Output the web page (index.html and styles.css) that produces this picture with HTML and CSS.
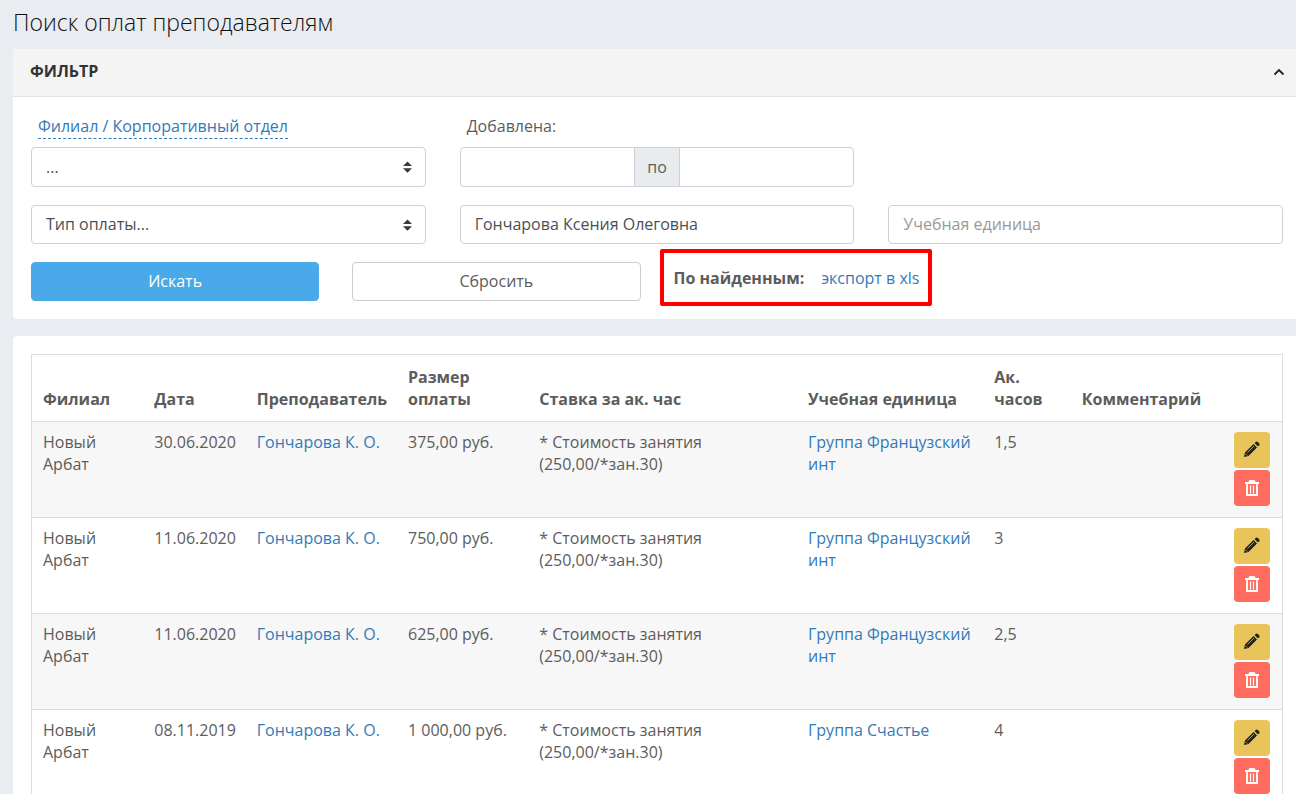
FILE: index.html
```html
<!DOCTYPE html>
<html lang="ru">
<head>
  <meta charset="UTF-8" />
  <title>Поиск оплат преподавателям</title>
  <link rel="stylesheet" href="styles.css">
</head>
<body>
  <!-- icons used in the table rows -->
  <svg class="sprite" aria-hidden="true">
    <symbol id="pencil" viewBox="0 0 18 18">
      <path fill="#222" d="M1 16l1-4.500 8.500-8.500 3.500 3.500L5.500 15zM11.500 2L13 .7q1-.6 1.800.2l1.400 1.400q.8.900.2 1.800L15 5.500z"/>
      <path fill="none" stroke="#e9c45b" stroke-width=".8" d="M4.500 11.500L11 5M2.500 12.800l1.800 1.800"/>
    </symbol>
    <symbol id="trash" viewBox="0 0 16 18">
      <path fill="none" stroke="#fff" stroke-width="2" stroke-linejoin="round" d="M1 4h14M5.200 3.500L6 2h4l.8 1.500"/>
      <path fill="none" stroke="#fff" stroke-width="1.800" d="M3 4v12h10V4"/>
      <path fill="none" stroke="#fff" stroke-width="1.200" d="M6.500 6.500v8M9.500 6.500v8"/>
    </symbol>
  </svg>

  <h1>Поиск оплат преподавателям</h1>

  <section class="panel">
    <div class="panel-header">
      <h2>ФИЛЬТР</h2>
      <button type="button" class="toggle" aria-label="Свернуть">
        <svg width="12" height="8" viewBox="0 0 12 8"><path d="M1.500 6.500L6 2l4.500 4.500" fill="none" stroke="#222" stroke-width="1.800"/></svg>
      </button>
    </div>
    <form class="panel-body" id="formFilter">
      <div class="fields">
        <div class="field">
          <label for="filial"><a href="#">Филиал / Корпоративный отдел</a></label>
          <select id="filial" class="control">
            <option>...</option>
          </select>
        </div>
        <div class="field">
          <label for="dateFrom">Добавлена:</label>
          <div class="range">
            <input type="text" id="dateFrom" class="control" />
            <span class="addon">по</span>
            <input type="text" id="dateTo" class="control" aria-label="Добавлена по" />
          </div>
        </div>
      </div>
      <div class="fields">
        <select class="control" aria-label="Тип оплаты">
          <option>Тип оплаты...</option>
        </select>
        <input type="text" class="control" value="Гончарова Ксения Олеговна" aria-label="Преподаватель" />
        <input type="text" class="control" placeholder="Учебная единица" aria-label="Учебная единица" />
      </div>
      <div class="actions">
        <button type="submit" class="btn btn-primary">Искать</button>
        <button type="reset" class="btn">Сбросить</button>
        <div class="found-cell">
          <div class="found"><b>По найденным:</b><a href="#">экспорт в xls</a></div>
        </div>
      </div>
    </form>
  </section>

  <section class="panel results">
    <table>
      <colgroup>
        <col class="c-filial"><col class="c-date"><col class="c-teacher"><col class="c-sum"><col class="c-rate"><col class="c-unit"><col class="c-hours"><col class="c-comment"><col>
      </colgroup>
      <thead>
        <tr>
          <th>Филиал</th>
          <th>Дата</th>
          <th>Преподаватель</th>
          <th>Размер оплаты</th>
          <th>Ставка за ак. час</th>
          <th>Учебная единица</th>
          <th>Ак. часов</th>
          <th>Комментарий</th>
          <th></th>
        </tr>
      </thead>
      <tbody>
        <tr>
          <td>Новый Арбат</td>
          <td>30.06.2020</td>
          <td><a href="#">Гончарова К. О.</a></td>
          <td>375,00 руб.</td>
          <td>* Стоимость занятия<br>(250,00/*зан.30)</td>
          <td><a href="#">Группа Французский инт</a></td>
          <td>1,5</td>
          <td></td>
          <td class="tools">
            <button type="button" class="icon edit" aria-label="Изменить"><svg width="18" height="18"><use href="#pencil"/></svg></button>
            <button type="button" class="icon delete" aria-label="Удалить"><svg width="16" height="18"><use href="#trash"/></svg></button>
          </td>
        </tr>
        <tr>
          <td>Новый Арбат</td>
          <td>11.06.2020</td>
          <td><a href="#">Гончарова К. О.</a></td>
          <td>750,00 руб.</td>
          <td>* Стоимость занятия<br>(250,00/*зан.30)</td>
          <td><a href="#">Группа Французский инт</a></td>
          <td>3</td>
          <td></td>
          <td class="tools">
            <button type="button" class="icon edit" aria-label="Изменить"><svg width="18" height="18"><use href="#pencil"/></svg></button>
            <button type="button" class="icon delete" aria-label="Удалить"><svg width="16" height="18"><use href="#trash"/></svg></button>
          </td>
        </tr>
        <tr>
          <td>Новый Арбат</td>
          <td>11.06.2020</td>
          <td><a href="#">Гончарова К. О.</a></td>
          <td>625,00 руб.</td>
          <td>* Стоимость занятия<br>(250,00/*зан.30)</td>
          <td><a href="#">Группа Французский инт</a></td>
          <td>2,5</td>
          <td></td>
          <td class="tools">
            <button type="button" class="icon edit" aria-label="Изменить"><svg width="18" height="18"><use href="#pencil"/></svg></button>
            <button type="button" class="icon delete" aria-label="Удалить"><svg width="16" height="18"><use href="#trash"/></svg></button>
          </td>
        </tr>
        <tr>
          <td>Новый Арбат</td>
          <td>08.11.2019</td>
          <td><a href="#">Гончарова К. О.</a></td>
          <td>1 000,00 руб.</td>
          <td>* Стоимость занятия<br>(250,00/*зан.30)</td>
          <td><a href="#">Группа Счастье</a></td>
          <td>4</td>
          <td></td>
          <td class="tools">
            <button type="button" class="icon edit" aria-label="Изменить"><svg width="18" height="18"><use href="#pencil"/></svg></button>
            <button type="button" class="icon delete" aria-label="Удалить"><svg width="16" height="18"><use href="#trash"/></svg></button>
          </td>
        </tr>
      </tbody>
    </table>
  </section>
</body>
</html>
```
FILE: styles.css
```css
* {
  box-sizing: border-box;
}

body {
  margin: 0;
  padding-left: 13px;
  font-family: "Open Sans", sans-serif;
  font-size: 16px;
  line-height: 22px;
  color: #5c5c5c;
  background-color: #e9ecf1;
}

a {
  color: #337ab7;
  text-decoration: none;
}

.sprite {
  display: none;
}

h1 {
  margin: 0;
  padding: 6px 0 11px;
  font-size: 23px;
  line-height: 32px;
  font-weight: 300;
  color: #111;
}

.panel {
  margin-bottom: 17px;
  background-color: white;
  border-radius: 4px 0 0 4px;
}

.panel-header {
  display: flex;
  justify-content: space-between;
  align-items: center;
  height: 48px;
  padding: 0 11px 3px 17px;
  background-color: #f4f4f4;
  border-bottom: 1px solid #e1e1e1;
}

h2 {
  margin: 0;
  font-size: 16px;
  font-weight: 700;
  color: #333;
}

.toggle {
  display: flex;
  padding: 2px 0 0;
  border: none;
  background: none;
  cursor: pointer;
}

.panel-body {
  display: grid;
  gap: 18px;
  padding: 18px 13px 18px 18px;
}

.fields {
  display: grid;
  grid-template-columns: repeat(3, 1fr);
  gap: 34px;
}

.field label {
  display: block;
  height: 22px;
  margin: 0 7px 10px;
}

.field label a {
  display: inline-block;
  height: 24px;
  border-bottom: 1px dashed #337ab7;
}

.control {
  display: block;
  width: 100%;
  min-width: 0;
  height: 39px;
  padding: 0 14px 2px;
  font: inherit;
  color: #495057;
  background-color: white;
  border: 1px solid #ced0da;
  border-radius: 4px;
}

.field .control {
  height: 40px;
  padding-bottom: 0;
}

.control::placeholder {
  color: #999;
  opacity: 1;
}

select.control {
  appearance: none;
  background: white url("data:image/svg+xml,%3Csvg xmlns='http://www.w3.org/2000/svg' viewBox='0 0 4 5'%3E%3Cpath fill='%23343a40' d='M2 0L0 2h4zm0 5L0 3h4z'/%3E%3C/svg%3E") no-repeat right 13px center;
  background-size: 9px 12px;
}

.range {
  display: flex;
}

.range .control:first-child {
  border-radius: 4px 0 0 4px;
}

.range .control:last-child {
  border-radius: 0 4px 4px 0;
}

.addon {
  padding: 8px 12px 0;
  background-color: #e9ecef;
  border: 1px solid #ced0da;
  border-width: 1px 0;
}

.actions {
  display: grid;
  grid-template-columns: repeat(4, 1fr);
  gap: 33px;
}

.btn {
  height: 39px;
  padding: 0 0 2px;
  font: inherit;
  color: #5c5c5c;
  background-color: white;
  border: 1px solid #ccc;
  border-radius: 4px;
  cursor: pointer;
}

.btn-primary {
  color: white;
  background-color: #4aa9e9;
  border-color: #4aa9e9;
}

.found-cell {
  padding-top: 5px;
}

.found {
  display: inline-flex;
  gap: 17px;
  position: relative;
  white-space: nowrap;
}

/* highlight frame around the export link */
.found::after {
  content: "";
  position: absolute;
  inset: -18px -13px -17px -14px;
  border: 4px solid #f00;
  border-radius: 2px;
  pointer-events: none;
}

.results {
  margin-bottom: 0;
  padding: 18px 13px 18px 18px;
}

table {
  width: 100%;
  table-layout: fixed;
  border-collapse: separate;
  border-spacing: 0;
  border: 1px solid #ddd;
  border-top: none;
}

th, td {
  padding: 9px 11px;
  border-top: 1px solid #ddd;
  text-align: left;
  vertical-align: top;
}

th {
  padding: 11px;
  vertical-align: bottom;
}

tbody tr:nth-child(odd) {
  background-color: #f7f7f7;
}

.c-filial { width: 8.9%; }
.c-date { width: 8.2%; }
.c-teacher { width: 12.1%; }
.c-sum { width: 10.5%; }
.c-rate { width: 21.5%; }
.c-unit { width: 14.9%; }
.c-hours { width: 7%; }
.c-comment { width: 12.1%; }

td.tools {
  padding: 10px 12px 11px;
}

.icon {
  display: flex;
  justify-content: center;
  align-items: center;
  width: 36px;
  height: 36px;
  padding: 0;
  border: none;
  border-radius: 4px;
  cursor: pointer;
}

.edit {
  margin-bottom: 2px;
  background-color: #e9c45b;
}

.delete {
  background-color: #ff6d60;
}
```
